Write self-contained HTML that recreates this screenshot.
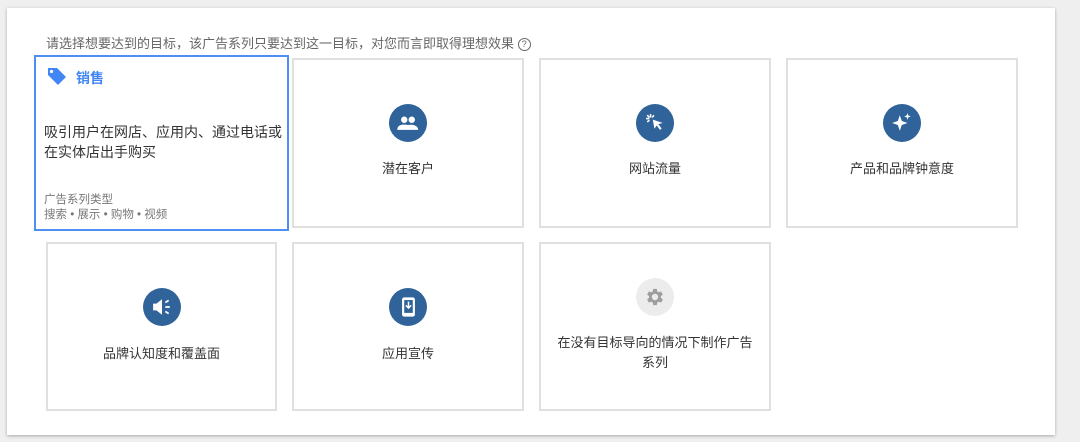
<!DOCTYPE html>
<html><head><meta charset="utf-8"><style>
body{margin:0;width:1080px;height:442px;background:#efefef;font-family:"Liberation Sans","Noto Sans CJK SC",sans-serif;position:relative;overflow:hidden}
.panel{position:absolute;left:7px;top:8px;width:1048px;height:427px;background:#fff;box-shadow:0 1px 3px rgba(0,0,0,.3)}
.hint{position:absolute;left:46px;top:33px;font-size:13px;color:#666}
.card{position:absolute;box-sizing:border-box;border:2px solid #e0e0e0;background:#fff;text-align:center;font-size:13px;color:#333}
.c{position:absolute;left:50%;margin-left:-19px;width:38px;height:38px;border-radius:50%;background:#2f6399;display:flex;align-items:center;justify-content:center}
.lb{position:absolute;left:0;right:0}
</style></head><body>
<div class="panel"></div>
<div class="hint">请选择想要达到的目标，该广告系列只要达到这一目标，对您而言即取得理想效果 <span style="display:inline-block;width:11px;height:11px;border:1.3px solid #666;border-radius:50%;font-size:9px;line-height:11px;text-align:center;vertical-align:1px">?</span></div>

<div class="card" style="left:34px;top:55px;width:255px;height:176px;border-color:#4d8ff2;text-align:left">
 <svg style="position:absolute;left:10px;top:9px" width="22" height="20" viewBox="0 0 22 20"><path d="M2 2h9l9 9-8 8-10-10z" fill="#4285f4"/><circle cx="5.5" cy="5.5" r="1.6" fill="#fff"/></svg>
 <div style="position:absolute;left:40px;top:11px;font-size:14px;font-weight:bold;color:#4285f4">销售</div>
 <div style="position:absolute;left:8px;top:65px;white-space:nowrap;font-size:14px;line-height:20px;color:#333">吸引用户在网店、应用内、通过电话或<br>在实体店出手购买</div>
 <div style="position:absolute;left:8px;top:136px;font-size:11.5px;line-height:15px;color:#777">广告系列类型<br>搜索 • 展示 • 购物 • 视频</div>
</div>

<div class="card" style="left:292px;top:58px;width:232px;height:170px">
 <div class="c" style="top:44px"><svg width="22" height="15" viewBox="0 0 20 14"><circle cx="6.5" cy="3.5" r="3" fill="#fff"/><circle cx="13.5" cy="3.5" r="3" fill="#fff"/><path d="M0 13c0-4 3-5 6.5-5s6.5 1 6.5 5zM11 13c0-2-.5-3-1.5-4.5 4 -1 10 0 10 4.5z" fill="#fff"/></svg></div>
 <div class="lb" style="top:98px">潜在客户</div>
</div>
<div class="card" style="left:539px;top:58px;width:232px;height:170px">
 <div class="c" style="top:44px"><svg width="20" height="20" viewBox="0 0 18 18"><path d="M7 6l9 3-4 1 3 4-1.5 1.2-3-4-2 3z" fill="#fff"/><path d="M5 1v3M1 5h3M2 2l2 2M8 2l-1.5 2M2 8l2-1.5" stroke="#fff" stroke-width="1.4"/></svg></div>
 <div class="lb" style="top:98px">网站流量</div>
</div>
<div class="card" style="left:786px;top:58px;width:232px;height:170px">
 <div class="c" style="top:44px"><svg width="22" height="22" viewBox="0 0 20 20"><path d="M8 3l1.8 5.2L15 10l-5.2 1.8L8 17l-1.8-5.2L1 10l5.2-1.8z" fill="#fff"/><path d="M15 1l.8 2.2L18 4l-2.2.8L15 7l-.8-2.2L12 4l2.2-.8z" fill="#fff"/></svg></div>
 <div class="lb" style="top:98px">产品和品牌钟意度</div>
</div>

<div class="card" style="left:46px;top:242px;width:231px;height:169px">
 <div class="c" style="top:44px"><svg width="20" height="18" viewBox="0 0 18 16"><path d="M1 5h3l5-4v14l-5-4H1z" fill="#fff"/><path d="M12 8h4M12 4l3-2M12 12l3 2" stroke="#fff" stroke-width="1.6"/></svg></div>
 <div class="lb" style="top:99px">品牌认知度和覆盖面</div>
</div>
<div class="card" style="left:292px;top:242px;width:232px;height:169px">
 <div class="c" style="top:44px"><svg width="15" height="22" viewBox="0 0 14 20"><rect x="1" y="1" width="12" height="18" rx="2" fill="#fff"/><rect x="3" y="3.5" width="8" height="12" fill="#2f6399"/><path d="M7 5v6M4.5 8.5 7 11l2.5-2.5" stroke="#fff" stroke-width="1.4" fill="none"/></svg></div>
 <div class="lb" style="top:99px">应用宣传</div>
</div>
<div class="card" style="left:539px;top:242px;width:232px;height:169px">
 <div class="c" style="top:34px;background:#ececec"><svg width="22" height="22" viewBox="0 0 24 24"><path fill="#9e9e9e" d="M19.4 13a7.5 7.5 0 0 0 0-2l2.1-1.6-2-3.5-2.5 1a7 7 0 0 0-1.7-1L15 3.2h-4l-.4 2.7a7 7 0 0 0-1.7 1l-2.5-1-2 3.5L6.5 11a7.5 7.5 0 0 0 0 2l-2.1 1.6 2 3.5 2.5-1a7 7 0 0 0 1.7 1l.4 2.7h4l.4-2.7a7 7 0 0 0 1.7-1l2.5 1 2-3.5zM13 15.5a3.5 3.5 0 1 1 0-7 3.5 3.5 0 0 1 0 7z" transform="translate(-1 0)"/></svg></div>
 <div class="lb" style="top:89px;line-height:20px">在没有目标导向的情况下制作广告<br>系列</div>
</div>
</body></html>
